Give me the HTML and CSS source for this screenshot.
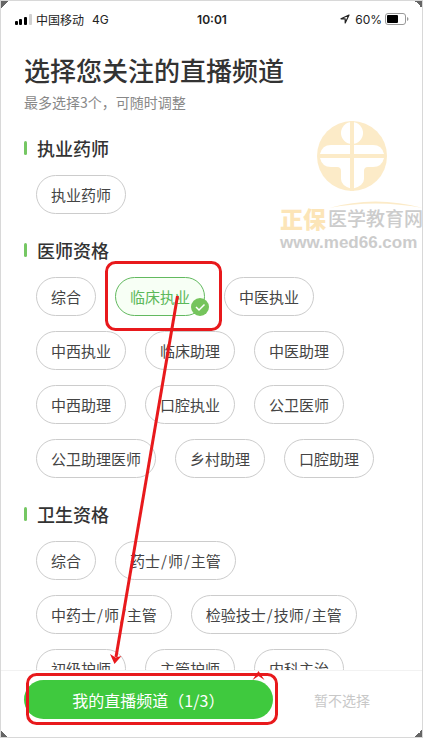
FILE: index.html
```html
<!DOCTYPE html>
<html lang="zh-CN">
<head>
<meta charset="utf-8">
<meta name="viewport" content="width=device-width, initial-scale=1">
<title>选择您关注的直播频道</title>
<link rel="stylesheet" href="styles.css">
</head>
<body>
<div class="screen">

  <!-- status bar -->
  <div class="status">
    <div class="status-left">
      <svg class="signal" width="17" height="11" viewBox="0 0 17 11">
        <rect x="0" y="7" width="3" height="4" rx="1"/>
        <rect x="4" y="5" width="3" height="6" rx="1"/>
        <rect x="9" y="3" width="3" height="8" rx="1"/>
        <rect x="14" y="0" width="3" height="11" rx="1" fill="#d0d0d0"/>
      </svg>
      <span>中国移动</span>
      <span class="net">4G</span>
    </div>
    <div class="time">10:01</div>
    <div class="status-right">
      <svg width="10" height="10" viewBox="0 0 10 10">
        <path d="M9 1L1 4.8h4.2V9z" fill="none" stroke="#222" stroke-width="1.2" stroke-linejoin="round"/>
      </svg>
      <span class="percent">60%</span>
      <svg width="24" height="12" viewBox="0 0 24 12">
        <rect x=".5" y=".5" width="20" height="11" rx="2.5" fill="none" stroke="#999"/>
        <rect x="2" y="2" width="11" height="8" rx="1"/>
        <path d="M22 4v4q1.500-.5 1.500-2t-1.500-2z" fill="#999"/>
      </svg>
    </div>
  </div>

  <!-- watermark -->
  <div class="watermark" aria-hidden="true">
    <svg class="wm-logo" width="70" height="70" viewBox="0 0 70 70">
      <circle cx="35" cy="35" r="35" fill="#fcebc8"/>
      <g fill="#fff">
        <circle cx="35" cy="12" r="11"/>
        <path d="M3 33q2-9 11-9h42q9 0 11 9z"/>
        <path d="M3 37h64q-2 9-11 9h-5q-4 0-4 4v8q0 7-12 10-11-3-11-10v-8q0-4-4-4h-6q-9 0-11-9z"/>
      </g>
      <path d="M33 0h4v70h-4zM1 33h68v4H1z" fill="#fcebc8"/>
    </svg>
    <svg class="wm-arc" width="94" height="8" viewBox="0 0 94 8">
      <path d="M0 7Q46-6 94 7Q46-2 0 7z" fill="#fcebc8"/>
    </svg>
    <div class="wm-name"><b>正保</b><span>医学教育网</span></div>
    <div class="wm-url">www.med66.com</div>
  </div>

  <main class="content">
    <h1>选择您关注的直播频道</h1>
    <p class="hint">最多选择3个，可随时调整</p>

    <section>
      <h2>执业药师</h2>
      <div class="chips">
        <button type="button" class="chip">执业药师</button>
      </div>
    </section>

    <section>
      <h2>医师资格</h2>
      <div class="chips">
        <button type="button" class="chip">综合</button>
        <button type="button" class="chip selected" aria-pressed="true">临床执业
          <svg class="check" width="18" height="18" viewBox="0 0 18 18">
            <circle cx="9" cy="9" r="9" fill="#75c45c"/>
            <path d="M5 9l3 3 5.500-5.500" fill="none" stroke="#fff" stroke-width="1.500"/>
          </svg>
        </button>
        <button type="button" class="chip">中医执业</button>
      </div>
      <div class="chips">
        <button type="button" class="chip">中西执业</button>
        <button type="button" class="chip">临床助理</button>
        <button type="button" class="chip">中医助理</button>
      </div>
      <div class="chips">
        <button type="button" class="chip">中西助理</button>
        <button type="button" class="chip">口腔执业</button>
        <button type="button" class="chip">公卫医师</button>
      </div>
      <div class="chips">
        <button type="button" class="chip">公卫助理医师</button>
        <button type="button" class="chip">乡村助理</button>
        <button type="button" class="chip">口腔助理</button>
      </div>
    </section>

    <section>
      <h2>卫生资格</h2>
      <div class="chips">
        <button type="button" class="chip">综合</button>
        <button type="button" class="chip">药士<i>/</i>师<i>/</i>主管</button>
      </div>
      <div class="chips">
        <button type="button" class="chip">中药士<i>/</i>师<i>/</i>主管</button>
        <button type="button" class="chip">检验技士<i>/</i>技师<i>/</i>主管</button>
      </div>
      <div class="chips">
        <button type="button" class="chip">初级护师</button>
        <button type="button" class="chip">主管护师</button>
        <button type="button" class="chip">内科主治</button>
      </div>
    </section>
  </main>

  <footer class="bottom">
    <button type="button" class="primary">我的直播频道（1/3）</button>
    <button type="button" class="skip">暂不选择</button>
  </footer>

  <!-- red guide marks -->
  <svg class="marks" width="423" height="738" viewBox="0 0 423 738" aria-hidden="true">
    <g fill="none" stroke="#e8191c" stroke-width="3">
      <rect x="106.500" y="262.500" width="114" height="67" rx="9"/>
      <rect x="27.500" y="674.500" width="249" height="49" rx="9"/>
      <path d="M177.500 296L116 657"/>
    </g>
    <path d="M114.500 664l-4.500-10 5.500 3.500 6-1.500zM258.500 671l-6 9 6-4 6 4z" fill="#e8191c"/>
  </svg>
  <div class="corners"></div>
</div>
</body>
</html>
```
FILE: styles.css
```css
* { box-sizing: border-box; }

body {
  margin: 0;
  background: #fff;
  color: #333;
  font-family: "Noto Sans CJK SC", "Noto Sans", sans-serif;
}

button {
  font-family: inherit;
  padding: 0;
  border: 0;
  background: none;
  cursor: pointer;
}

.screen {
  position: relative;
  display: flex;
  flex-direction: column;
  height: 100vh;
  overflow: hidden;
}

/* status bar */
.status {
  display: grid;
  grid-template-columns: 1fr auto 1fr;
  align-items: center;
  height: 38px;
  padding: 0 14px 0 15px;
  font-size: 12px;
  color: #222;
}
.status-left, .status-right {
  display: flex;
  align-items: center;
}
.status-left { gap: 4px; }
.status-right { justify-content: flex-end; }
.net, .percent, .time { font-family: Inter, sans-serif; }
.net { margin-left: 4px; }
.percent { margin: 0 3px 0 5px; }
.time { font-weight: 600; }

/* watermark */
.watermark {
  position: absolute;
  top: 121px;
  right: 0;
  width: 143px;
  display: flex;
  flex-direction: column;
  white-space: nowrap;
}
.wm-logo { margin-left: 37px; }
.wm-arc { margin: 10px 0 0 49px; }
.wm-name {
  display: flex;
  align-items: center;
  margin-top: -3px;
  font-size: 19px;
  line-height: 24px;
  font-weight: 500;
  color: #ccc;
}
.wm-name b {
  margin-right: 2px;
  font-size: 23px;
  font-weight: 900;
  color: #fce5b8;
}
.wm-url {
  margin-top: 3px;
  font: bold 17px/20px "Liberation Sans", sans-serif;
  color: #ccc;
}

/* channel list */
.content {
  position: relative;
  flex: 1;
  min-height: 0;
  overflow: hidden;
  padding: 14px 24px 0;
}
h1 {
  margin: 0;
  font-size: 26px;
  line-height: 36px;
  font-weight: 500;
}
.hint {
  margin: 4px 0 23px;
  font-size: 14px;
  line-height: 20px;
  color: #888;
}
section { margin-bottom: 23px; }
h2 {
  display: flex;
  align-items: center;
  gap: 10px;
  margin: 0 0 14px;
  font-size: 18px;
  line-height: 26px;
  font-weight: 500;
}
h2::before {
  content: "";
  width: 3px;
  height: 14px;
  border-radius: 2px;
  background: #75c763;
}
.chips {
  display: flex;
  gap: 19px;
  margin: 0 0 15px 12px;
}
.chips:last-child { margin-bottom: 0; }
.chip {
  position: relative;
  height: 39px;
  padding: 0 14px;
  border: 1px solid #ccc;
  border-radius: 20px;
  font-size: 15px;
  color: #444;
  white-space: nowrap;
}
.chip i {
  margin: 0 1px;
  font-style: normal;
}
.selected {
  border-color: #62b95f;
  background: #f7fff5;
  color: #5cb85a;
}
.check {
  position: absolute;
  right: -5px;
  bottom: -1px;
}

/* bottom bar */
.bottom {
  position: relative;
  display: flex;
  align-items: center;
  height: 68px;
  padding: 0 12px 10px 24px;
  border-top: 1px solid #f2f2f2;
  background: #fff;
}
.primary {
  flex: 9;
  height: 39px;
  border-radius: 20px;
  background: #3fc93e;
  color: #fff;
  font-size: 16px;
}
.skip {
  flex: 5;
  font-size: 14px;
  color: #c8c8c8;
}

.marks {
  position: absolute;
  top: 0;
  left: 0;
  pointer-events: none;
}

/* thin frame with cut corners */
.corners {
  position: absolute;
  inset: 0;
  border: 1px solid #d8d8d8;
  background:
    linear-gradient(135deg, #666 50%, transparent 50%) left top,
    linear-gradient(225deg, #666 50%, transparent 50%) right top,
    linear-gradient(45deg, #666 50%, transparent 50%) left bottom,
    linear-gradient(315deg, #666 50%, transparent 50%) right bottom;
  background-size: 9px 9px;
  background-repeat: no-repeat;
  background-origin: border-box;
  pointer-events: none;
}
```
